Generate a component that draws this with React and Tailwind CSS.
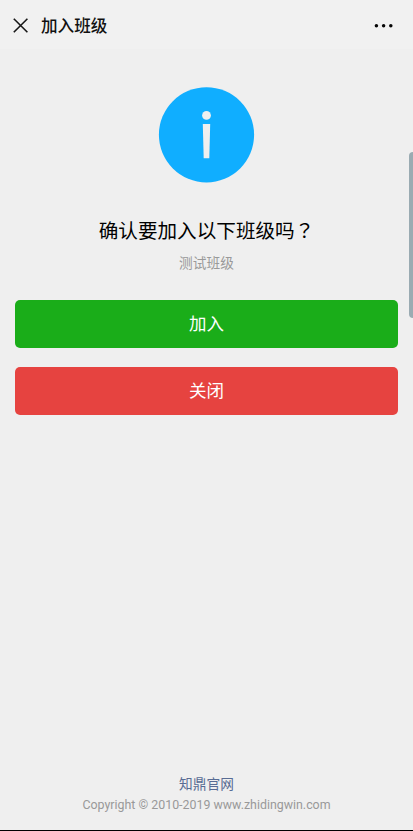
import clsx from 'clsx';

const HEADING = '确认要加入以下班级吗';
const CLASS_NAME = '测试班级';

const Header = () => (
  <header className="flex h-[49px] shrink-0 items-center bg-[#f1f1f1] pt-px pl-[13px] pr-5">
    <button type="button" aria-label="关闭页面">
      <svg width="15" height="15" viewBox="0 0 15 15" fill="none" stroke="#161616" strokeWidth="1.6">
        <path d="M0.8 0.8 14.4 14.2M14.4 0.8 0.8 14.2" />
      </svg>
    </button>
    <h1 className="ml-[13px] pt-[4px] text-[16.6px] leading-6 font-medium text-[#111]">加入班级</h1>
    <button type="button" aria-label="更多" className="ml-auto">
      <svg width="19" height="6" viewBox="0 0 19 6" fill="#050505">
        <circle cx="2.4" cy="3.7" r="1.75" />
        <circle cx="9.6" cy="3.7" r="1.75" />
        <circle cx="16.8" cy="3.7" r="1.75" />
      </svg>
    </button>
  </header>
);

const InfoIcon = () => (
  <svg className="mx-auto" width="97" height="96" viewBox="0 0 97 96">
    <circle cx="48.5" cy="47.8" r="47.6" fill="#10aeff" />
    <circle cx="48.5" cy="28.4" r="4.4" fill="#efefef" />
    <path d="M44.8 37h7.4l-0.9 34.2h-5.6z" fill="#efefef" />
  </svg>
);

const ActionButton = ({ className, children }) => (
  <button
    type="button"
    className={clsx(
      'h-12 w-full rounded-[5px] text-[17.5px] text-white',
      className
    )}
  >
    {children}
  </button>
);

const App = () => {
  return (
    <div className="relative flex h-[831px] w-full flex-col overflow-hidden border-b border-black bg-[#efefef] font-['Roboto','Noto_Sans_CJK_SC',sans-serif]">
      <Header />

      <main className="flex-1 px-[15px] pt-[38px]">
        <InfoIcon />
        <div className="text-center">
          <h2 className="mt-[33px] h-[30px] text-[19.6px] leading-7 whitespace-nowrap text-black">
            {HEADING}
            <span className="font-['Noto_Sans_CJK_TC',sans-serif]">？</span>
          </h2>
          <p className="mt-[7px] text-[13.7px] leading-5 text-[#999]">{CLASS_NAME}</p>
        </div>
        <div className="mt-[27px] flex flex-col gap-[19px]">
          <ActionButton className="bg-[#1aad19]">加入</ActionButton>
          <ActionButton className="bg-[#e64340]">关闭</ActionButton>
        </div>
      </main>

      <footer className="pb-[15px] text-center">
        <a href="#" className="block text-[13.7px] leading-5 text-[#586c94]">知鼎官网</a>
        <p className="mt-px text-[12.4px] leading-5 whitespace-nowrap text-[#999]">
          Copyright © 2010-2019 www.zhidingwin.com
        </p>
      </footer>

      {/* edge panel handle */}
      <div className="absolute top-[152px] right-0 h-[166px] w-1 rounded-l-[4px] bg-[#9aabb2]" />
    </div>
  );
};

export default App;
